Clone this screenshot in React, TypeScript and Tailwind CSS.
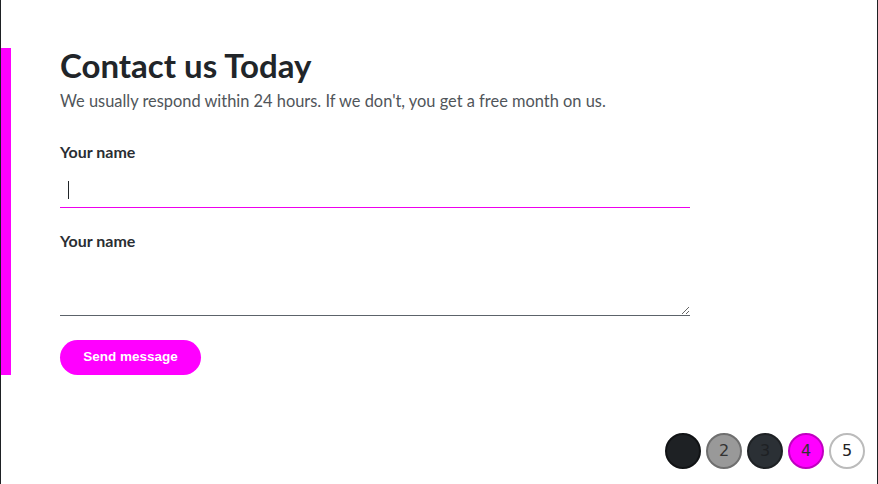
import React from "react";

export default function App() {
  const font = { fontFamily: "Lato, 'Noto Sans', sans-serif" };
  return (
    <div className="relative h-[484px] w-[878px] overflow-hidden border-x border-[#1e2124] bg-white" style={font}>
      <div className="pt-[48px]">
        <div className="flex w-[700px] flex-col border-l-[10px] border-[#ff00ff] pl-[49px]">
          <h1 className="-mt-[3px] text-[33px] font-bold leading-[40px] text-[#212529]">Contact us Today</h1>
          <p className="mt-[4px] text-[16.4px] leading-[24px] text-[#50555a]">
            We usually respond within 24 hours. If we don't, you get a free month on us.
          </p>
          <form className="mt-[27px] flex w-[630px] flex-col" onSubmit={(e) => e.preventDefault()}>
            <label className="text-[16px] font-bold leading-[24px] text-[#2a2e33]">Your name</label>
            <div className="relative mt-[8px]">
              <input
                type="text"
                className="h-[36px] w-full border-b border-b-[#ee00ee] bg-transparent px-[8px] text-[16px] outline-none"
              />
              <span className="absolute left-[8px] top-[9px] h-[18px] w-px bg-[#212529]" />
            </div>
            <label className="mt-[21px] text-[16px] font-bold leading-[24px] text-[#2a2e33]">Your name</label>
            <textarea className="mt-[8px] block h-[55px] w-full resize-y border-0 border-b border-b-[#5c636a] bg-transparent px-[8px] outline-none" />
            <div className="mt-[24px]">
              <button
                type="submit"
                className="h-[35px] w-[141px] rounded-full bg-[#ff00ff] text-[13.5px] font-bold text-white"
                style={{ fontFamily: "'Liberation Sans Narrow', 'Liberation Sans', sans-serif" }}
              >
                Send message
              </button>
            </div>
          </form>
        </div>
      </div>
      <div
        className="absolute bottom-[15px] right-[12px] flex gap-[5px]"
        style={{ fontFamily: "'DejaVu Sans', sans-serif" }}
      >
        <span className="flex h-[36px] w-[36px] items-center justify-center rounded-full border-2 border-[#111315] bg-[#1e2124] text-[16px] text-[#1e2124]">1</span>
        <span className="flex h-[36px] w-[36px] items-center justify-center rounded-full border-2 border-[#6f6f6f] bg-[#999999] text-[16px] text-[#333333]">2</span>
        <span className="flex h-[36px] w-[36px] items-center justify-center rounded-full border-2 border-[#1e2124] bg-[#2b3035] text-[16px] text-[#1e2124]">3</span>
        <span className="flex h-[36px] w-[36px] items-center justify-center rounded-full border-2 border-[#c000c0] bg-[#ff00ff] text-[16px] text-[#333333]">4</span>
        <span className="flex h-[36px] w-[36px] items-center justify-center rounded-full border-2 border-[#bbbbbb] bg-white text-[16px] text-[#222222]">5</span>
      </div>
    </div>
  );
}
